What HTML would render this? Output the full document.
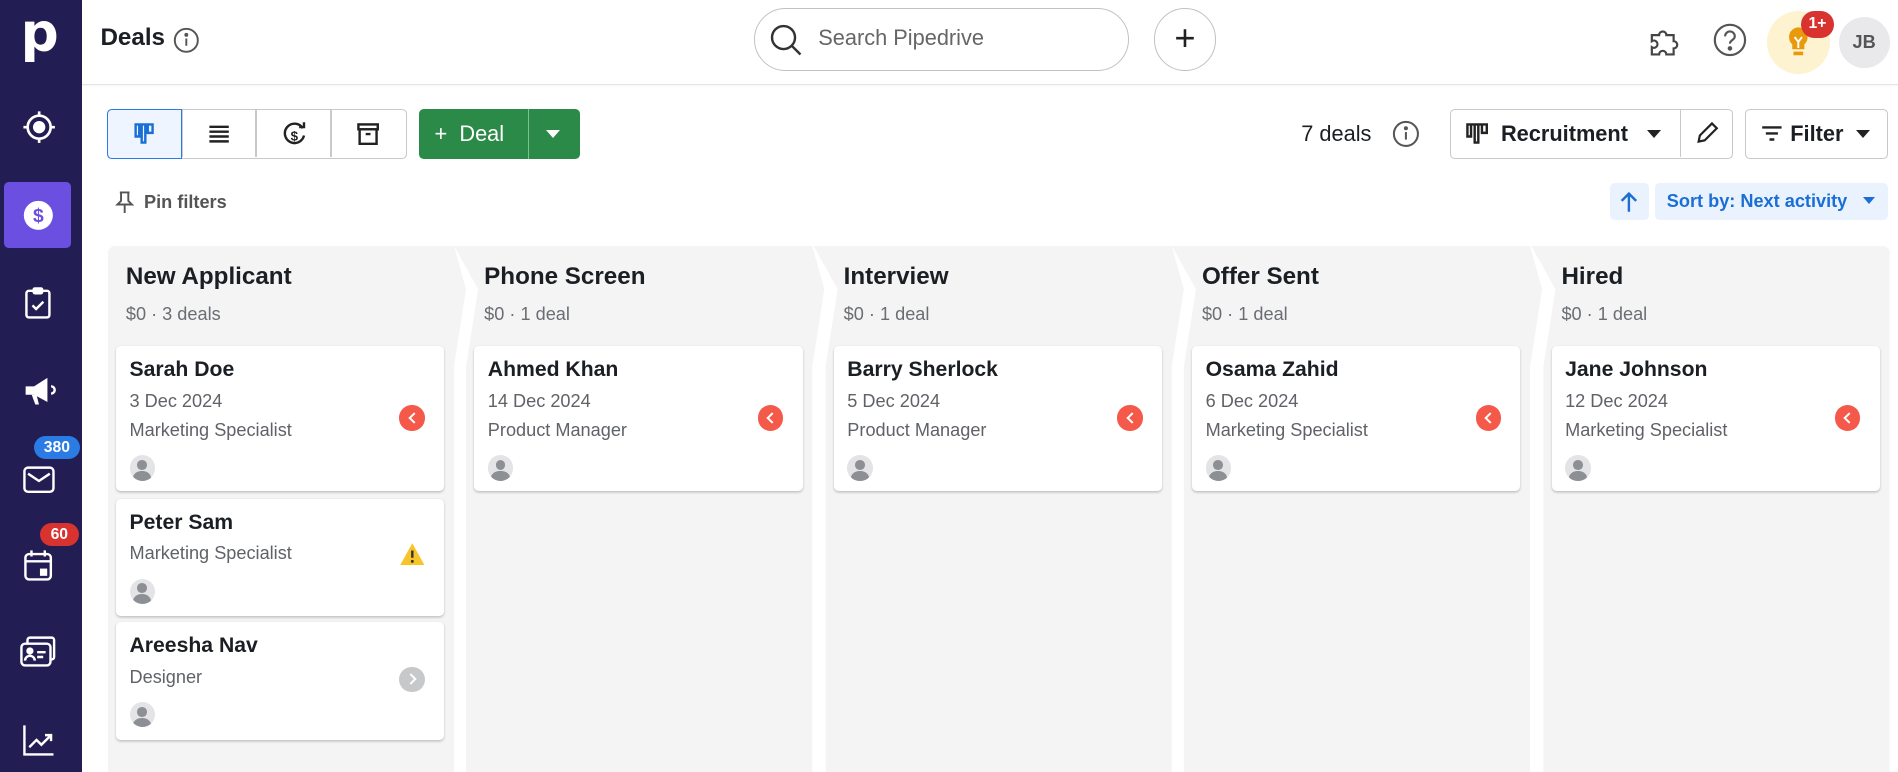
<!DOCTYPE html>
<html><head><meta charset="utf-8"><style>
*{box-sizing:border-box;margin:0;padding:0}
html,body{width:1898px;height:772px;overflow:hidden;background:#fff}
#root{zoom:1.21046;width:1568px;height:638px;position:relative;font-family:"Liberation Sans",sans-serif;color:#1b1f24;overflow:hidden}
.abs{position:absolute}
.side{left:0;top:0;width:68px;height:638px;background:#221d52}
.side svg{position:absolute}
.badge{position:absolute;color:#fff;font-weight:bold;font-size:13px;border-radius:10px;height:19px;line-height:19px;text-align:center}
.top{left:68px;top:0;right:0;height:70px;border-bottom:1px solid #e4e4e4;box-shadow:0 1px 2px rgba(0,0,0,.05)}
.btn{position:absolute;border:1px solid #c8c9cc;border-radius:4px;background:#fff}
.col{position:absolute;top:203px;height:440px;background:#f4f4f4}
.col h3{position:absolute;left:15px;top:14px;font-size:20px;font-weight:bold;color:#1b1f24}
.col .sub{position:absolute;left:15px;top:48px;font-size:15px;color:#6a6d72}
.card{position:absolute;left:7px;width:271px;background:#fff;border-radius:4px;box-shadow:0 1px 2px rgba(0,0,0,.22)}
.card b{position:absolute;left:11px;top:10px;font-size:17.5px}
.card .l1{position:absolute;left:11px;font-size:15px;color:#5f6267}
.av{position:absolute;left:11px;width:21px;height:21px;border-radius:50%;background:#e4e4e6;overflow:hidden}
.av:before{content:"";position:absolute;left:6.5px;top:4px;width:8px;height:8px;border-radius:50%;background:#8c8f94}
.av:after{content:"";position:absolute;left:3px;top:13px;width:15px;height:12px;border-radius:50%;background:#8c8f94}
.red{position:absolute;right:16px;width:21px;height:21px;border-radius:50%;background:#f4594a}
.red:after{content:"";position:absolute;left:8.5px;top:7px;width:5px;height:5px;border-left:2px solid #fff;border-bottom:2px solid #fff;transform:rotate(45deg)}
.gr{position:absolute;right:16px;width:21px;height:21px;border-radius:50%;background:#c7c8ca}
.gr:after{content:"";position:absolute;left:6px;top:7px;width:5px;height:5px;border-right:2px solid #fff;border-top:2px solid #fff;transform:rotate(45deg)}
</style></head><body><div id="root">
<div class="abs side">
 <div class="abs" style="left:17px;top:2px;color:#fff;font-size:44px;font-weight:bold;font-family:'DejaVu Sans';">p</div>
 <svg style="left:17px;top:90px" width="30" height="30" viewBox="0 0 30 30" fill="none" stroke="#fff" stroke-width="2.2"><circle cx="15" cy="15" r="9.5"/><circle cx="15" cy="15" r="4" fill="#fff"/><path d="M15 2v4M15 24v4M2 15h4M24 15h4"/></svg>
 <div class="abs" style="left:3px;top:150px;width:56px;height:55px;background:#6b4fe0;border-radius:4px"></div>
 <svg style="left:18px;top:164px" width="27" height="27" viewBox="0 0 27 27"><circle cx="13.5" cy="13.5" r="12" fill="#fff"/><text x="13.5" y="19" text-anchor="middle" font-size="16" font-weight="bold" fill="#6b4fe0" font-family="Liberation Sans">$</text></svg>
 <svg style="left:20px;top:236px" width="24" height="30" viewBox="0 0 24 30" fill="none" stroke="#fff" stroke-width="2"><rect x="2" y="4" width="19" height="22" rx="2"/><rect x="8" y="2" width="7" height="4" rx="1" fill="#fff"/><path d="M7 16l3 3 6-6"/></svg>
 <svg style="left:18px;top:308px" width="28" height="28" viewBox="0 0 28 28" fill="#fff"><path d="M3 11h7l11-7v20l-11-6H3z"/><path d="M8 18l3 8h3l-2-8z"/><path d="M24 11a3 3 0 010 6" stroke="#fff" stroke-width="2" fill="none"/></svg>
 <div class="badge" style="left:28px;top:360px;width:38px;background:#2a7be4">380</div>
 <svg style="left:18px;top:383px" width="28" height="26" viewBox="0 0 28 26" fill="none" stroke="#fff" stroke-width="2"><rect x="2" y="3" width="24" height="20" rx="3"/><path d="M5 8l9 6 9-6"/></svg>
 <div class="badge" style="left:33px;top:432px;width:32px;background:#d8332f">60</div>
 <svg style="left:19px;top:453px" width="26" height="28" viewBox="0 0 26 28" fill="none" stroke="#fff" stroke-width="2"><rect x="2" y="5" width="21" height="21" rx="3"/><path d="M2 11h21M7 2v5M18 2v5"/><rect x="14" y="17" width="6" height="6" fill="#fff" stroke="none"/></svg>
 <svg style="left:16px;top:524px" width="32" height="28" viewBox="0 0 32 28" fill="none" stroke="#fff" stroke-width="2"><rect x="2" y="8" width="24" height="18" rx="3"/><path d="M7 8V5a2 2 0 012-2h18a2 2 0 012 2v14a2 2 0 01-2 2h-1"/><circle cx="9" cy="14" r="2" fill="#fff"/><path d="M5 22a4 4 0 018 0M15 15h7M15 19h5"/></svg>
 <svg style="left:18px;top:597px" width="28" height="28" viewBox="0 0 28 28" fill="none" stroke="#fff" stroke-width="2"><path d="M2 2v24h24M6 20l6-6 4 4 8-8M19 10h5v5"/></svg>
</div>
<div class="abs top">
 <div class="abs" style="left:15px;top:20px;font-size:20px;font-weight:bold">Deals</div>
 <svg class="abs" style="left:75px;top:22px" width="22" height="22" viewBox="0 0 22 22" fill="none" stroke="#555" stroke-width="1.6"><circle cx="11" cy="11" r="9.5"/><path d="M11 9.5v6"/><circle cx="11" cy="6.5" r="0.8" fill="#555"/></svg>
 <div class="abs" style="left:555px;top:7px;width:310px;height:52px;border:1px solid #bfc1c5;border-radius:26px"></div>
 <svg class="abs" style="left:567px;top:19px" width="28" height="28" viewBox="0 0 28 28" fill="none" stroke="#333" stroke-width="2"><circle cx="12" cy="12" r="9.5"/><path d="M19 19l7 7"/></svg>
 <div class="abs" style="left:608px;top:21px;font-size:18px;color:#666">Search Pipedrive</div>
 <div class="abs" style="left:885px;top:7px;width:52px;height:52px;border:1px solid #bfc1c5;border-radius:50%;text-align:center;line-height:48px;font-size:30px;color:#222">+</div>
 <svg class="abs" style="left:1293px;top:19px" width="28" height="30" viewBox="0 0 28 30" fill="none" stroke="#444" stroke-width="1.8"><path d="M4 10h6a3 3 0 116 0h6v5a3 3 0 110 6v5H16a3 3 0 10-6 0H4v-6a3 3 0 100-5z"/></svg>
 <svg class="abs" style="left:1347px;top:19px" width="28" height="28" viewBox="0 0 28 28" fill="none" stroke="#555" stroke-width="1.8"><circle cx="14" cy="14" r="12.5"/><path d="M10 11a4 4 0 118 0c0 3-4 3-4 6"/><circle cx="14" cy="21" r="1" fill="#555"/></svg>
 <div class="abs" style="left:1392px;top:9px;width:52px;height:52px;border-radius:50%;background:#fdf3d0"></div>
 <svg class="abs" style="left:1407px;top:21px" width="22" height="30" viewBox="0 0 22 30"><path d="M11 2a8 8 0 00-5 14v4h10v-4a8 8 0 00-5-14z" fill="#e89a0c"/><rect x="7" y="22" width="8" height="3" fill="#e89a0c"/><path d="M8 10l3 4 3-4M11 14v5" stroke="#fff" stroke-width="1.6" fill="none"/></svg>
 <div class="badge" style="left:1420px;top:9px;width:27px;height:22px;line-height:22px;border-radius:11px;background:#d8332f;font-size:13px">1+</div>
 <div class="abs" style="left:1451px;top:14px;width:42px;height:42px;border-radius:50%;background:#e9e9eb;text-align:center;line-height:42px;font-size:15px;color:#555;font-weight:bold">JB</div>
</div>
<!-- toolbar -->
<div class="btn" style="left:88px;top:90px;width:248px;height:41px"></div>
<div class="abs" style="left:88px;top:90px;width:62px;height:41px;background:#eef5ff;border:1px solid #2a7be4;border-radius:4px 0 0 4px"></div>
<div class="abs" style="left:211px;top:91px;width:1px;height:39px;background:#c8c9cc"></div>
<div class="abs" style="left:273px;top:91px;width:1px;height:39px;background:#c8c9cc"></div>
<div class="abs" style="left:150px;top:91px;width:1px;height:39px;background:#c8c9cc"></div>
<svg class="abs" style="left:109px;top:101px" width="20" height="20" viewBox="0 0 20 20" fill="none" stroke="#1a6fd6" stroke-width="2"><path d="M2 2h16M3 2v10h3V2M8 2v15h3V2M13 2v7h4V2"/></svg>
<svg class="abs" style="left:171px;top:101px" width="20" height="20" viewBox="0 0 20 20" stroke="#222" stroke-width="2"><path d="M2 4h16M2 8h16M2 12h16M2 16h16"/></svg>
<svg class="abs" style="left:232px;top:100px" width="22" height="22" viewBox="0 0 22 22" fill="none" stroke="#222" stroke-width="2"><path d="M18 6A8 8 0 1019 12"/><path d="M15 5h4V1"/><text x="11" y="16" text-anchor="middle" font-size="11" fill="#222" stroke="none" font-weight="bold" font-family="Liberation Sans">$</text></svg>
<svg class="abs" style="left:294px;top:101px" width="20" height="20" viewBox="0 0 20 20" fill="none" stroke="#222" stroke-width="2"><rect x="2" y="2" width="16" height="4"/><path d="M3 6v12h14V6M8 10h4"/></svg>
<div class="abs" style="left:346px;top:90px;width:133px;height:41px;background:#2b8a48;border-radius:4px"></div>
<div class="abs" style="left:436px;top:90px;width:1px;height:41px;background:#7fc093"></div>
<div class="abs" style="left:359px;top:100px;color:#fff;font-size:18px">+&nbsp; Deal</div>
<div class="abs" style="left:451px;top:107px;border:6px solid transparent;border-top:7px solid #fff"></div>
<div class="abs" style="left:1075px;top:100px;font-size:18px">7 deals</div>
<svg class="abs" style="left:1150px;top:99px" width="23" height="23" viewBox="0 0 22 22" fill="none" stroke="#555" stroke-width="1.6"><circle cx="11" cy="11" r="9.5"/><path d="M11 9.5v6"/><circle cx="11" cy="6.5" r="0.8" fill="#555"/></svg>
<div class="btn" style="left:1198px;top:90px;width:234px;height:41px"></div>
<div class="abs" style="left:1388px;top:91px;width:1px;height:39px;background:#c8c9cc"></div>
<svg class="abs" style="left:1210px;top:101px" width="20" height="20" viewBox="0 0 20 20" fill="none" stroke="#222" stroke-width="2"><path d="M1 2h18M2 2v10h3V2M8 2v15h3V2M14 2v7h4V2"/></svg>
<div class="abs" style="left:1240px;top:100px;font-size:18px;font-weight:bold">Recruitment</div>
<div class="abs" style="left:1361px;top:107px;border:6px solid transparent;border-top:7px solid #222"></div>
<svg class="abs" style="left:1400px;top:100px" width="20" height="20" viewBox="0 0 20 20" fill="none" stroke="#222" stroke-width="1.8"><path d="M3 17l1-5 10-10 4 4-10 10z"/></svg>
<div class="btn" style="left:1442px;top:90px;width:118px;height:41px"></div>
<svg class="abs" style="left:1455px;top:103px" width="18" height="14" viewBox="0 0 18 14" stroke="#222" stroke-width="2"><path d="M1 2h16M4 7h10M7 12h4"/></svg>
<div class="abs" style="left:1479px;top:100px;font-size:18px;font-weight:bold">Filter</div>
<div class="abs" style="left:1533px;top:107px;border:6px solid transparent;border-top:7px solid #222"></div>
<svg class="abs" style="left:95px;top:157px" width="16" height="20" viewBox="0 0 16 20" fill="none" stroke="#555" stroke-width="1.6"><path d="M4 2h8M5 2v7l-3 3h12l-3-3V2M8 12v7"/></svg>
<div class="abs" style="left:119px;top:159px;font-size:15px;color:#555;font-weight:bold">Pin filters</div>
<div class="abs" style="left:1330px;top:151px;width:32px;height:31px;background:#eaf2fd;border-radius:4px"></div>
<svg class="abs" style="left:1337px;top:157px" width="18" height="20" viewBox="0 0 18 20" fill="none" stroke="#1a6fd6" stroke-width="2"><path d="M9 18V3M3 9l6-6 6 6"/></svg>
<div class="abs" style="left:1367px;top:151px;width:193px;height:31px;background:#eaf2fd;border-radius:4px"></div>
<div class="abs" style="left:1377px;top:158px;font-size:15px;color:#1a6fd6;font-weight:bold">Sort by: Next activity</div>
<div class="abs" style="left:1539px;top:163px;border:5px solid transparent;border-top:6px solid #1a6fd6"></div>
<!-- columns -->
<div class="col" style="left:89px;width:296px;border-radius:6px 0 0 0;clip-path:polygon(0 0,286px 0,296px 36px,286px 100px,286px 100%,0 100%)">
 <h3>New Applicant</h3><div class="sub">$0 · 3 deals</div>
 <div class="card" style="top:83px;height:120px"><b>Sarah Doe</b><div class="l1" style="top:37px">3 Dec 2024</div><div class="l1" style="top:61px">Marketing Specialist</div><div class="red" style="top:49px"></div><div class="av" style="top:90px"></div></div>
 <div class="card" style="top:209px;height:97px"><b>Peter Sam</b><div class="l1" style="top:37px">Marketing Specialist</div>
  <svg class="abs" style="left:234px;top:36px" width="22" height="20" viewBox="0 0 22 20"><path d="M11 1L21 19H1z" fill="#f7c529"/><path d="M11 7v6" stroke="#333" stroke-width="2"/><circle cx="11" cy="16" r="1.2" fill="#333"/></svg>
  <div class="av" style="top:66px"></div></div>
 <div class="card" style="top:311px;height:97px"><b>Areesha Nav</b><div class="l1" style="top:37px">Designer</div><div class="gr" style="top:37px"></div>
  <div class="av" style="top:66px"></div></div>
</div>
<div class="col" style="left:375px;width:307px;clip-path:polygon(0 0,296px 0,306px 36px,296px 100px,296px 100%,10px 100%,10px 100px,20px 36px)">
 <div style="position:absolute;left:10px;top:0;width:290px;height:100%"><h3>Phone Screen</h3><div class="sub">$0 · 1 deal</div>
 <div class="card" style="top:83px;height:120px"><b>Ahmed Khan</b><div class="l1" style="top:37px">14 Dec 2024</div><div class="l1" style="top:61px">Product Manager</div><div class="red" style="top:49px"></div><div class="av" style="top:90px"></div></div></div>
</div>
<div class="col" style="left:672px;width:307px;clip-path:polygon(0 0,296px 0,306px 36px,296px 100px,296px 100%,10px 100%,10px 100px,20px 36px)">
 <div style="position:absolute;left:10px;top:0;width:290px;height:100%"><h3>Interview</h3><div class="sub">$0 · 1 deal</div>
 <div class="card" style="top:83px;height:120px"><b>Barry Sherlock</b><div class="l1" style="top:37px">5 Dec 2024</div><div class="l1" style="top:61px">Product Manager</div><div class="red" style="top:49px"></div><div class="av" style="top:90px"></div></div></div>
</div>
<div class="col" style="left:968px;width:307px;clip-path:polygon(0 0,296px 0,306px 36px,296px 100px,296px 100%,10px 100%,10px 100px,20px 36px)">
 <div style="position:absolute;left:10px;top:0;width:290px;height:100%"><h3>Offer Sent</h3><div class="sub">$0 · 1 deal</div>
 <div class="card" style="top:83px;height:120px"><b>Osama Zahid</b><div class="l1" style="top:37px">6 Dec 2024</div><div class="l1" style="top:61px">Marketing Specialist</div><div class="red" style="top:49px"></div><div class="av" style="top:90px"></div></div></div>
</div>
<div class="col" style="left:1265px;width:296px;border-radius:0 6px 0 0;clip-path:polygon(0 0,296px 0,296px 100%,10px 100%,10px 100px,20px 36px)">
 <div style="position:absolute;left:10px;top:0;width:290px;height:100%"><h3>Hired</h3><div class="sub">$0 · 1 deal</div>
 <div class="card" style="top:83px;height:120px"><b>Jane Johnson</b><div class="l1" style="top:37px">12 Dec 2024</div><div class="l1" style="top:61px">Marketing Specialist</div><div class="red" style="top:49px"></div><div class="av" style="top:90px"></div></div></div>
</div>
</div></body></html>
